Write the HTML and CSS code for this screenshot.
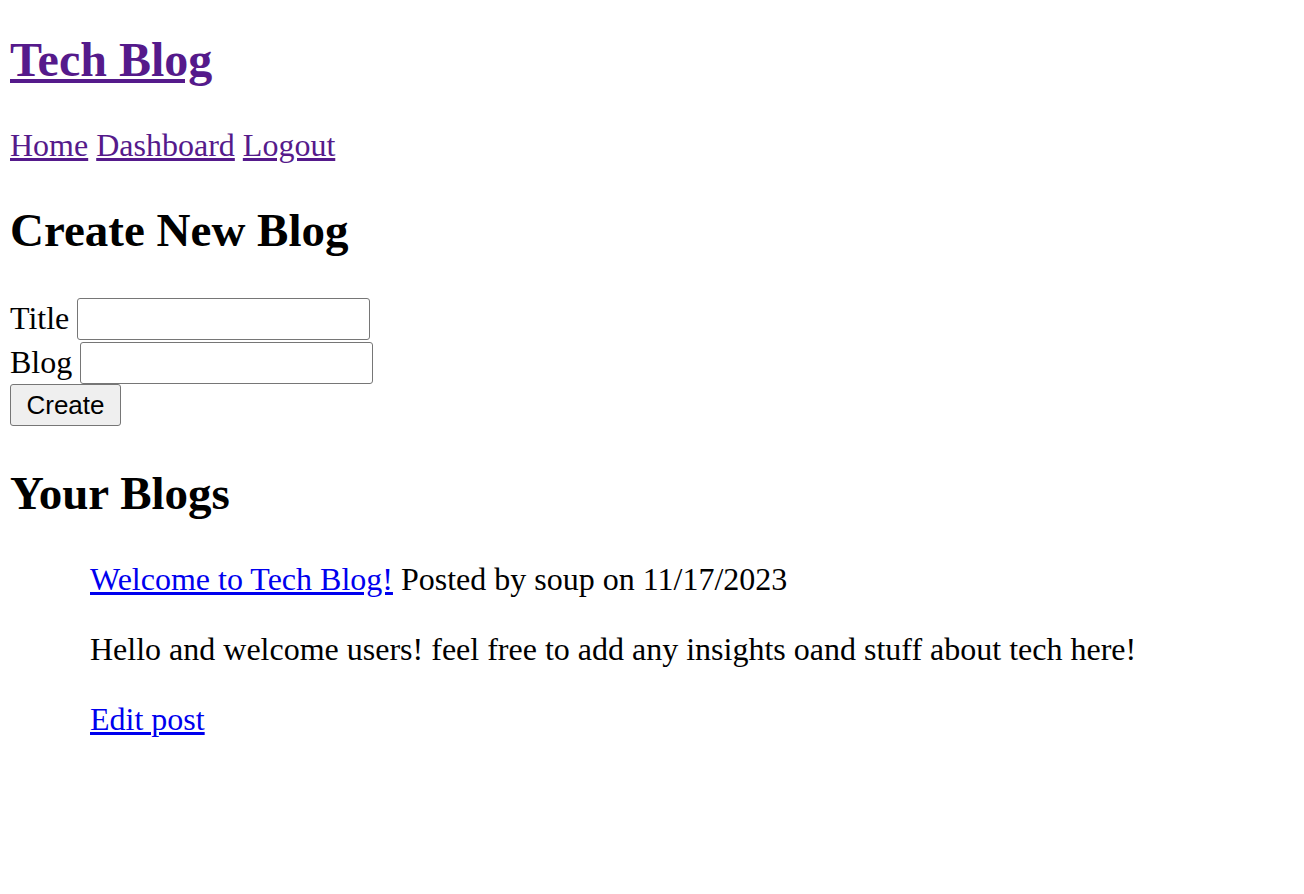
FILE: index.html
```html
<!DOCTYPE html>
<html>
<head>
<meta charset="utf-8">
<link rel="stylesheet" href="styles.css">
</head>
<body>
<header class="site-header">
  <h1 class="site-title"><a class="visited" href="#">Tech Blog</a></h1>
  <nav class="nav"><a class="visited" href="#">Home</a> <a class="visited" href="#">Dashboard</a> <a class="visited" href="#">Logout</a></nav>
</header>
<main>
  <h2 class="section-title">Create New Blog</h2>
  <form class="new-form">
    <div class="field"><label>Title</label> <input class="text-input" type="text"></div>
    <div class="field"><label>Blog</label> <input class="text-input" type="text"></div>
    <button class="btn" type="button">Create</button>
  </form>
  <h2 class="section-title second">Your Blogs</h2>
  <ul class="posts">
    <li class="post">
      <p class="post-meta"><a class="link" href="#">Welcome to Tech Blog!</a> Posted by soup on 11/17/2023</p>
      <p class="post-body">Hello and welcome users! feel free to add any insights oand stuff about tech here!</p>
      <p class="post-edit"><a class="link" href="#">Edit post</a></p>
    </li>
  </ul>
</main>
</body>
</html>
```
FILE: styles.css
```css
html, body {
  margin: 0;
  padding: 0;
  background: #fff;
}
body {
  padding: 10px;
  font-family: "Liberation Serif", "Times New Roman", serif;
  font-size: 32px;
  color: #000;
}
a.visited { color: #551a8b; }
a.link { color: #0000ee; }
.site-title {
  font-size: 48px;
  margin: 22px 0 0;
  line-height: 56px;
}
.nav {
  margin: 39px 0 0;
  line-height: 37px;
}
.section-title {
  font-size: 47px;
  line-height: 54px;
  margin: 39px 0 0;
}
.new-form {
  margin-top: 41px;
  display: flex;
  flex-direction: column;
  align-items: flex-start;
}
.field {
  display: flex;
  align-items: flex-start;
  gap: 8px;
  height: 42px;
}
.field + .field { margin-top: 2px; }
.field label { line-height: 40px; }
.text-input {
  width: 293px;
  height: 42px;
  box-sizing: border-box;
  border: 1px solid #767676;
  border-radius: 3px;
  margin: 0;
  padding: 0 4px;
  font-size: 20px;
}
.btn {
  height: 42px;
  width: 111px;
  box-sizing: border-box;
  margin: 0;
  border: 1px solid #767676;
  border-radius: 3px;
  background: #efefef;
  font-family: "Liberation Sans", Arial, sans-serif;
  font-size: 26px;
  color: #000;
  padding: 0;
}
.section-title.second {
  margin-top: 40px;
}
.posts {
  list-style: none;
  margin: 41px 0 0;
  padding: 0 0 0 80px;
}
.posts p {
  margin: 33px 0 0;
  line-height: 37px;
}
.posts .post-meta { margin-top: 0; }
```
